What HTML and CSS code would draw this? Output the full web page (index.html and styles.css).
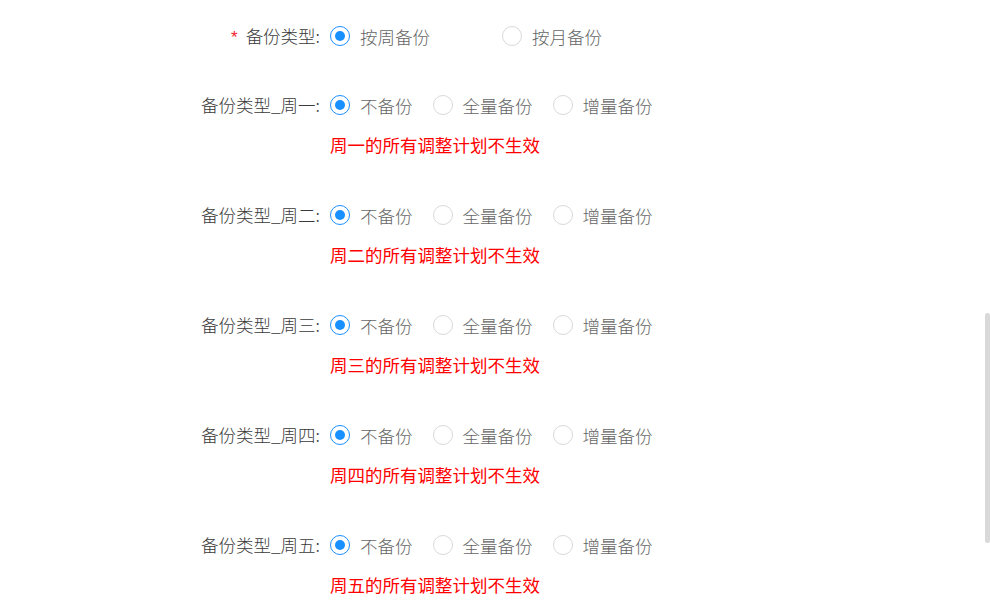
FILE: index.html
```html
<!DOCTYPE html>
<html lang="zh-CN">
<head>
    <meta charset="UTF-8">
    <meta name="viewport" content="width=device-width, initial-scale=1.0">
    <title>备份计划</title>
    <link rel="stylesheet" href="styles.css">
</head>
<body>
    <form id="backup-form" class="form">
        <div class="form-item form-item-first">
            <label class="form-label"><span class="required">*</span>备份类型:</label>
            <div class="form-control">
                <div class="radio-group">
                    <label class="radio radio-wide checked"><span class="radio-inner"></span><span class="radio-text">按周备份</span></label>
                    <label class="radio radio-wide"><span class="radio-inner"></span><span class="radio-text">按月备份</span></label>
                </div>
            </div>
        </div>

        <div id="days"></div>
    </form>

    <div class="scroll-thumb"></div>

    <script>
        const days = ['周一', '周二', '周三', '周四', '周五'];
        const options = ['不备份', '全量备份', '增量备份'];

        function buildDay(day) {
            const item = document.createElement('div');
            item.className = 'form-item';

            const label = document.createElement('label');
            label.className = 'form-label';
            label.textContent = '备份类型_' + day + ':';
            item.appendChild(label);

            const control = document.createElement('div');
            control.className = 'form-control';

            const group = document.createElement('div');
            group.className = 'radio-group';
            options.forEach((text, i) => {
                const radio = document.createElement('label');
                radio.className = 'radio' + (i === 0 ? ' checked' : '');
                radio.innerHTML = '<span class="radio-inner"></span><span class="radio-text">' + text + '</span>';
                group.appendChild(radio);
            });
            control.appendChild(group);

            const hint = document.createElement('div');
            hint.className = 'form-hint';
            hint.textContent = day + '的所有调整计划不生效';
            control.appendChild(hint);

            item.appendChild(control);
            return item;
        }

        const container = document.getElementById('days');
        days.forEach(day => container.appendChild(buildDay(day)));
    </script>
</body>
</html>
```

FILE: styles.css
```css
body {
    margin: 0;
    background-color: #fff;
    font-family: "Noto Sans CJK SC", "Noto Sans", sans-serif;
    font-size: 17.5px;
    font-weight: 300;
    overflow: hidden;
}
.form {
    padding-top: 11px;
}
.form-item {
    display: flex;
    margin-bottom: 30px;
}
.form-item-first {
    margin-bottom: 17px;
}
.form-label {
    width: 320px;
    flex-shrink: 0;
    text-align: right;
    line-height: 50px;
    color: #3a3a3a;
}
.required {
    color: #f5222d;
    font-family: "Liberation Sans", sans-serif;
    font-size: 17px;
    margin-right: 8px;
}
.form-control {
    margin-left: 10px;
}
.radio-group {
    display: flex;
    align-items: center;
    height: 50px;
}
.radio {
    display: flex;
    align-items: center;
    margin-right: 10px;
    color: #666;
    cursor: pointer;
}
.radio-wide {
    width: 172px;
    margin-right: 0;
}
.radio-inner {
    position: relative;
    width: 20px;
    height: 20px;
    box-sizing: border-box;
    border: 1px solid #d9d9d9;
    border-radius: 50%;
    background-color: #fff;
}
.radio.checked .radio-inner {
    border-color: #1890ff;
}
.radio.checked .radio-inner::after {
    content: "";
    position: absolute;
    top: 4px;
    left: 4px;
    width: 10px;
    height: 10px;
    border-radius: 50%;
    background-color: #1890ff;
}
.radio-text {
    padding: 0 10px;
}
.form-hint {
    line-height: 30px;
    font-weight: 400;
    color: #ff0000;
}
.scroll-thumb {
    position: fixed;
    top: 313px;
    right: 0;
    width: 5px;
    height: 230px;
    border-radius: 3px;
    background-color: #d9d9d9;
}
```
